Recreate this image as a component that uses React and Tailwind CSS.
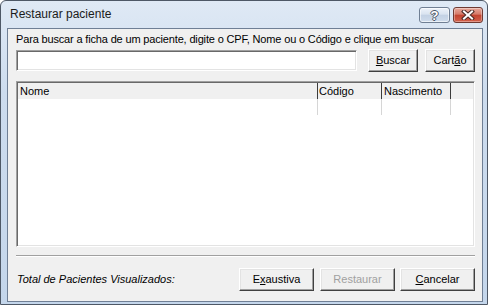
import React from "react";

const F = "font-['Liberation_Sans',Arial,sans-serif]";

function Btn({ children, w = "w-[75px]", disabled = false }) {
  return (
    <div
      className={`${w} h-[23px] flex items-center justify-center bg-[#f0f0f0] border border-t-white border-l-white border-r-[#404040] border-b-[#404040] shadow-[inset_-1px_-1px_0_#a0a0a0,inset_1px_1px_0_#e3e3e3] text-[11px] leading-[13px] ${
        disabled ? "text-[#a0a0a0]" : "text-black"
      }`}
    >
      {children}
    </div>
  );
}

export default function App() {
  return (
    <div className={`w-[490px] h-[308px] bg-white ${F}`}>
      <div className="w-[488px] h-[305px] border border-[#4e5866] rounded-t-[6px] bg-[linear-gradient(to_bottom,#dfe9f5,#cddcee_30%,#c4d6eb)] flex flex-col pl-[6px] pr-[4px] pb-[2px]">
        {/* title bar */}
        <div className="h-[27px] flex items-start shrink-0">
          <div className="pl-[3px] pt-[6px] text-[12px] leading-[14px] text-[#1b1b1b]">
            Restaurar paciente
          </div>
          <div className="ml-auto mt-[6px] flex gap-[3px]">
            <div className="w-[31px] h-[16px] rounded-[3px] border border-[#707f94] bg-[linear-gradient(to_bottom,#eef3fa,#d9e3f0_45%,#c3d1e4_50%,#cfdcec)] flex items-center justify-center shadow-[inset_0_0_0_1px_rgba(255,255,255,0.6)]">
              <span className="text-[13px] leading-[13px] font-bold text-white [text-shadow:1px_0_0_#4a5566,-1px_0_0_#4a5566,0_1px_0_#4a5566,0_-1px_0_#4a5566]">
                ?
              </span>
            </div>
            <div className="w-[30px] h-[16px] rounded-[3px] border border-[#6e3a33] bg-[linear-gradient(to_bottom,#e7a99c,#d57a69_45%,#c2432f_50%,#d2614c)] flex items-center justify-center shadow-[inset_0_0_0_1px_rgba(255,255,255,0.35)]">
              <svg width="14" height="10" viewBox="0 0 14 10">
                <path d="M3 1.5 L11 8.5 M11 1.5 L3 8.5" stroke="#4a2a25" strokeWidth="4" strokeLinecap="square" />
                <path d="M3 1.5 L11 8.5 M11 1.5 L3 8.5" stroke="#ffffff" strokeWidth="2" strokeLinecap="square" />
              </svg>
            </div>
          </div>
        </div>
        {/* client */}
        <div className="flex-1 border border-[#6f7f95] bg-[#f0f0f0] flex flex-col pl-[8px] pr-[7px] text-black">
          <div className="pt-[4px] text-[11px] leading-[13px] tracking-[-0.16px] whitespace-nowrap">
            Para buscar a ficha de um paciente, digite o CPF, Nome ou o Código e clique em buscar
          </div>
          <div className="mt-[3px] h-[23px] flex items-center">
            <div className="flex-1 h-[21px] bg-white border border-t-[#a0a0a0] border-l-[#a0a0a0] border-r-white border-b-white shadow-[inset_1px_1px_0_#696969,inset_-1px_-1px_0_#e3e3e3]" />
            <div className="ml-[11px]">
              <Btn w="w-[50px]">
                <span className="underline underline-offset-1">B</span>uscar
              </Btn>
            </div>
            <div className="ml-[7px]">
              <Btn w="w-[50px]">
                Cart<span className="underline underline-offset-1">ã</span>o
              </Btn>
            </div>
          </div>
          {/* list */}
          <div className="mt-[9px] h-[166px] bg-white border border-t-[#a0a0a0] border-l-[#a0a0a0] border-r-white border-b-white shadow-[inset_1px_1px_0_#696969,inset_-1px_-1px_0_#e3e3e3] p-[1px] flex flex-col">
            <div className="h-[16px] bg-[#f0f0f0] flex text-[11px] leading-[16px]">
              <div className="w-[300px] pl-[2px] border-r border-[#3c3c3c]">Nome</div>
              <div className="w-[64px] pl-[1px] border-r border-[#3c3c3c]">Código</div>
              <div className="w-[69px] pl-[2px] border-r border-[#3c3c3c]">Nascimento</div>
              <div className="flex-1" />
            </div>
            <div className="h-[16px] flex">
              <div className="w-[300px] border-r border-[#d6d6d6]" />
              <div className="w-[64px] border-r border-[#d6d6d6]" />
              <div className="w-[69px] border-r border-[#d6d6d6]" />
            </div>
          </div>
          {/* separator */}
          <div className="mt-[8px] h-[2px] border-t border-[#a0a0a0] border-b border-b-white" />
          <div className="mt-[11px] h-[23px] flex items-center">
            <div className="pl-[1px] text-[11px] italic leading-[13px]">
              Total de Pacientes Visualizados:
            </div>
            <div className="ml-auto flex">
              <Btn>
                E<span className="underline underline-offset-1">x</span>austiva
              </Btn>
              <div className="ml-[6px]">
                <Btn disabled>Restaurar</Btn>
              </div>
              <div className="ml-[5px]">
                <Btn>
                  <span className="underline underline-offset-1">C</span>ancelar
                </Btn>
              </div>
            </div>
          </div>
        </div>
      </div>
    </div>
  );
}
